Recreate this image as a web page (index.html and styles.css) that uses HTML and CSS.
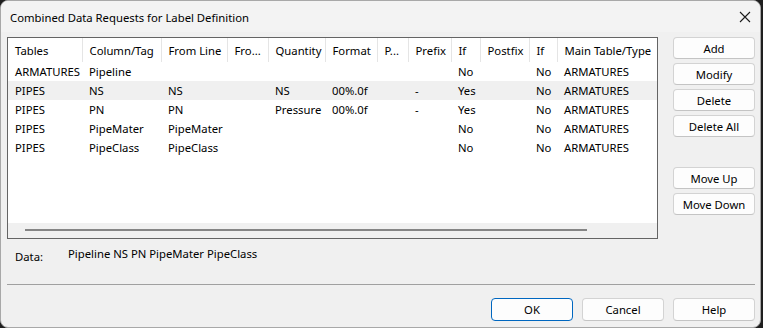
FILE: index.html
```html
<!doctype html>
<html lang="en">
    <head>
        <meta charset="UTF-8" />
        <meta name="viewport" content="width=device-width, initial-scale=1.0" />
        <title>Combined Data Requests for Label Definition</title>
        <link rel="stylesheet" href="styles.css">
    </head>
    <body>
        <div class="window">
            <!-- Title bar -->
            <div class="titlebar">
                <span class="title">Combined Data Requests for Label Definition</span>
                <svg class="close" width="12" height="12" viewBox="0 0 12 12">
                    <path d="M1 1 L11 11 M11 1 L1 11" stroke="#1b1b1b" stroke-width="1.1" fill="none" />
                </svg>
            </div>

            <div class="content">
                <div class="main">
                    <!-- List of requests -->
                    <div class="listbox">
                        <div class="list-inner">
                            <table class="grid">
                                <colgroup>
                                    <col style="width: 74px" />
                                    <col style="width: 79px" />
                                    <col style="width: 66px" />
                                    <col style="width: 41px" />
                                    <col style="width: 57px" />
                                    <col style="width: 52px" />
                                    <col style="width: 31px" />
                                    <col style="width: 43px" />
                                    <col style="width: 29px" />
                                    <col style="width: 49px" />
                                    <col style="width: 28px" />
                                    <col style="width: 140px" />
                                </colgroup>
                                <thead>
                                    <tr>
                                        <th>Tables</th>
                                        <th>Column/Tag</th>
                                        <th>From Line</th>
                                        <th>Fro...</th>
                                        <th>Quantity</th>
                                        <th>Format</th>
                                        <th>P...</th>
                                        <th>Prefix</th>
                                        <th>If</th>
                                        <th>Postfix</th>
                                        <th>If</th>
                                        <th>Main Table/Type</th>
                                    </tr>
                                </thead>
                                <tbody>
                                    <tr>
                                        <td>ARMATURES</td><td>Pipeline</td><td></td><td></td><td></td><td></td>
                                        <td></td><td></td><td>No</td><td></td><td>No</td><td>ARMATURES</td>
                                    </tr>
                                    <tr class="selected">
                                        <td>PIPES</td><td>NS</td><td>NS</td><td></td><td>NS</td><td>00%.0f</td>
                                        <td></td><td>-</td><td>Yes</td><td></td><td>No</td><td>ARMATURES</td>
                                    </tr>
                                    <tr>
                                        <td>PIPES</td><td>PN</td><td>PN</td><td></td><td>Pressure</td><td>00%.0f</td>
                                        <td></td><td>-</td><td>Yes</td><td></td><td>No</td><td>ARMATURES</td>
                                    </tr>
                                    <tr>
                                        <td>PIPES</td><td>PipeMater</td><td>PipeMater</td><td></td><td></td><td></td>
                                        <td></td><td></td><td>No</td><td></td><td>No</td><td>ARMATURES</td>
                                    </tr>
                                    <tr>
                                        <td>PIPES</td><td>PipeClass</td><td>PipeClass</td><td></td><td></td><td></td>
                                        <td></td><td></td><td>No</td><td></td><td>No</td><td>ARMATURES</td>
                                    </tr>
                                </tbody>
                            </table>
                        </div>
                        <div class="hscroll"><div class="thumb"></div></div>
                    </div>

                    <!-- Side buttons -->
                    <div class="side">
                        <div class="btn-group">
                            <button class="btn">Add</button>
                            <button class="btn">Modify</button>
                            <button class="btn">Delete</button>
                            <button class="btn">Delete All</button>
                        </div>
                        <div class="btn-group">
                            <button class="btn">Move Up</button>
                            <button class="btn">Move Down</button>
                        </div>
                    </div>
                </div>

                <div class="data-row">
                    <span class="data-label">Data:</span>
                    <span class="data-value">Pipeline NS PN PipeMater PipeClass</span>
                </div>

                <div class="separator"></div>

                <div class="footer">
                    <button class="btn btn-default">OK</button>
                    <button class="btn">Cancel</button>
                    <button class="btn">Help</button>
                </div>
            </div>
        </div>
    </body>
</html>
```

FILE: styles.css
```css
/* Dialog look */
html,
body {
    margin: 0;
    padding: 0;
}
body {
    background-color: #1f1f1f;
    font-family: "Noto Sans", "Open Sans", sans-serif;
    font-size: 11.3px;
    color: #000;
    width: 763px;
    height: 328px;
    overflow: hidden;
}
.window {
    width: 759px;
    height: 326px;
    background-color: #f0f0f0;
    border: 1px solid #a8a8a8;
    border-radius: 8px;
    overflow: hidden;
}
.titlebar {
    height: 31px;
    background-color: #f3f3f3;
    display: flex;
    align-items: center;
    justify-content: space-between;
    padding: 0 8px 0 9px;
}
.title {
    font-size: 11.3px;
    margin-top: 1px;
}
.close {
    margin-right: 1px;
    margin-top: 1px;
}
.content {
    padding: 5px 5px 0 6px;
}
.main {
    display: flex;
    gap: 15px;
}
.listbox {
    width: 649px;
    height: 200px;
    border: 1px solid #646464;
    background-color: #fff;
    display: flex;
    flex-direction: column;
}
.list-inner {
    flex: 1;
    overflow: hidden;
}
.grid {
    width: 689px;
    border-collapse: collapse;
    table-layout: fixed;
    white-space: nowrap;
}
.grid th {
    font-weight: normal;
    text-align: left;
    height: 24px;
    padding: 0 0 0 7px;
    border-right: 1px solid #e5e5e5;
    overflow: hidden;
}
.grid td {
    height: 19px;
    padding: 0 0 0 7px;
    overflow: hidden;
}
.grid tr.selected td {
    background-color: #f0f0f0;
}
.hscroll {
    height: 15px;
    background-color: #f0f0f0;
    padding: 6px 0 0 17px;
    box-sizing: border-box;
}
.thumb {
    width: 562px;
    height: 2px;
    background-color: #858585;
}
.side {
    width: 82px;
    display: flex;
    flex-direction: column;
    gap: 30px;
}
.btn-group {
    display: flex;
    flex-direction: column;
    gap: 4px;
}
.btn {
    font-family: inherit;
    font-size: 11.3px;
    color: #000;
    height: 22px;
    padding: 0;
    background-color: #fdfdfd;
    border: 1px solid #d3d3d3;
    border-bottom-color: #c4c4c4;
    border-radius: 4px;
}
.data-row {
    display: flex;
    align-items: baseline;
    height: 33px;
    padding: 7px 0 0 8px;
    box-sizing: border-box;
}
.data-label {
    width: 53px;
    position: relative;
    top: 3px;
}
.separator {
    margin-top: 12px;
    width: 748px;
    height: 1px;
    background-color: #a0a0a0;
}
.footer {
    display: flex;
    justify-content: flex-end;
    gap: 9px;
    padding: 13px 0 0 0;
    width: 748px;
}
.footer .btn {
    width: 82px;
    height: 23px;
}
.btn-default {
    border: 1px solid #0067c0;
    border-bottom-color: #0067c0;
}
```
